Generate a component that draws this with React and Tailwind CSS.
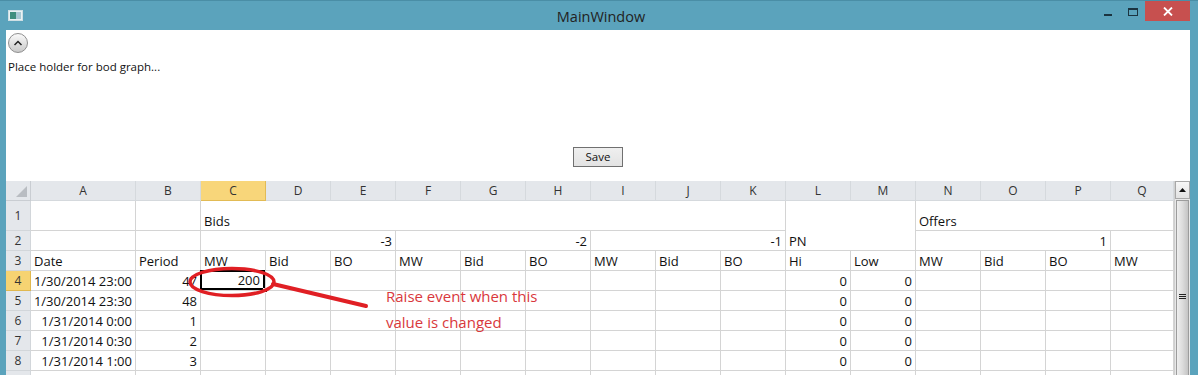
import React from "react";

const COLS = ["A","B","C","D","E","F","G","H","I","J","K","L","M","N","O","P","Q"];

function Cell({ className = "", children }) {
  return (
    <div className={"border-r border-b border-[#d4d4d4] px-[3px] overflow-hidden whitespace-nowrap flex " + className}>
      {children}
    </div>
  );
}

function RowHead({ n, active }) {
  return (
    <div className={"border-r border-b flex items-center justify-center text-[12px] text-[#333] " + (active ? "bg-[#f6d372] border-[#e0b84f]" : "bg-[#e4e7eb] border-[#d2d6da]")}>
      {n}
    </div>
  );
}

const dataRows = [
  { r: 4, a: "1/30/2014 23:00", b: "47", c: "200", l: "0", m: "0" },
  { r: 5, a: "1/30/2014 23:30", b: "48", c: "", l: "0", m: "0" },
  { r: 6, a: "1/31/2014 0:00", b: "1", c: "", l: "0", m: "0" },
  { r: 7, a: "1/31/2014 0:30", b: "2", c: "", l: "0", m: "0" },
  { r: 8, a: "1/31/2014 1:00", b: "3", c: "", l: "0", m: "0" },
  { r: 9, a: "", b: "", c: "", l: "", m: "", hideNum: true },
];

const row3 = ["Date","Period","MW","Bid","BO","MW","Bid","BO","MW","Bid","BO","Hi","Low","MW","Bid","BO","MW"];

export default function App() {
  return (
    <div className="relative w-[1198px] h-[375px] overflow-hidden bg-[#5ba3bc] flex flex-col font-['Open_Sans',sans-serif]">
      {/* Title bar */}
      <div className="h-[30px] shrink-0 flex items-start relative border-t border-[#4a8ea6]">
        <div className="pl-[8px] pt-[9px]">
          <svg width="15" height="11" viewBox="0 0 15 11">
            <rect x="0.5" y="0.5" width="14" height="10" fill="#e9f2f4" stroke="#cfdfe4" />
            <rect x="2" y="2" width="6" height="7" fill="#3f8f7f" />
            <rect x="8" y="2" width="5" height="7" fill="#a9c9d4" />
          </svg>
        </div>
        <div className="flex-1 text-center text-[14.5px] text-[#222] pt-[5px] pl-[84px]">MainWindow</div>
        <div className="flex items-start">
          <div className="w-[25px] h-[19px] flex items-center justify-center">
            <div className="w-[8px] h-[2px] bg-[#1b3440] mt-[8px]" />
          </div>
          <div className="w-[25px] h-[19px] flex items-center justify-center">
            <div className="w-[10px] h-[8px] border border-[#1b3440] border-t-2 mt-[2px]" />
          </div>
          <div className="w-[45px] h-[20px] bg-[#c7504f] flex items-center justify-center mr-[8px]">
            <svg width="10" height="9" viewBox="0 0 10 9">
              <path d="M1 0.5 L9 8.5 M9 0.5 L1 8.5" stroke="#fff" strokeWidth="1.8" />
            </svg>
          </div>
        </div>
      </div>

      {/* Client area */}
      <div className="flex-1 ml-[6px] mr-[8px] bg-white flex flex-col">
        <div className="pl-[2px] pt-[3px]">
          <div className="w-[20px] h-[20px] rounded-full border border-[#8f8f8f] bg-gradient-to-b from-[#fafafa] to-[#c9c9c9] flex items-center justify-center">
            <svg width="10" height="6" viewBox="0 0 10 6">
              <path d="M1.5 5 L5 1.5 L8.5 5" stroke="#222" strokeWidth="1.5" fill="none" />
            </svg>
          </div>
        </div>
        <div className="pl-[2px] pt-[6px] text-[11.5px] leading-[16px] text-[#111]">Place holder for bod graph...</div>
        <div className="h-[72px] shrink-0" />
        <div className="flex justify-center">
          <div className="w-[50px] h-[20px] border border-[#707070] bg-gradient-to-b from-[#efefef] to-[#e3e3e3] flex items-center justify-center text-[11.5px] text-[#111]">Save</div>
        </div>
        <div className="h-[14px] shrink-0" />

        {/* Spreadsheet */}
        <div className="flex text-[13px] leading-[18px] text-[#111]">
          <div className="grid grid-cols-[25px_105px_repeat(15,65px)_63px] grid-rows-[20px_30px_repeat(8,20px)]">
            {/* header row */}
            <div className="bg-[#e4e7eb] border-r border-b border-[#c9cdd2] relative">
              <svg className="absolute right-[3px] bottom-[3px]" width="11" height="11" viewBox="0 0 11 11">
                <path d="M11 0 L11 11 L0 11 Z" fill="#b9bdc2" />
              </svg>
            </div>
            {COLS.map((c) => (
              <div
                key={c}
                className={
                  "flex items-center justify-center text-[12px] text-[#333] border-b border-r " +
                  (c === "C" ? "bg-[#f8d67a] border-[#e2bb55]" : "bg-[#e4e7eb] border-[#d5d9dd]")
                }
              >
                {c}
              </div>
            ))}

            {/* row 1 */}
            <RowHead n={1} />
            <Cell />
            <Cell />
            <Cell className="col-span-9 items-end">Bids</Cell>
            <Cell className="col-span-2 row-span-2 items-end">PN</Cell>
            <Cell className="col-span-4 items-end">Offers</Cell>

            {/* row 2 */}
            <RowHead n={2} />
            <Cell />
            <Cell />
            <Cell className="col-span-3 items-center justify-end">-3</Cell>
            <Cell className="col-span-3 items-center justify-end">-2</Cell>
            <Cell className="col-span-3 items-center justify-end">-1</Cell>
            <Cell className="col-span-3 items-center justify-end">1</Cell>
            <Cell />

            {/* row 3 */}
            <RowHead n={3} />
            {row3.map((t, i) => (
              <Cell key={i} className="items-center">{t}</Cell>
            ))}

            {/* data rows */}
            {dataRows.map((d) => (
              <React.Fragment key={d.r}>
                <RowHead n={d.hideNum ? "" : d.r} active={d.r === 4} />
                <Cell className="items-center justify-end">{d.a}</Cell>
                <Cell className="items-center justify-end">{d.b}</Cell>
                {d.r === 4 ? (
                  <div className="relative border-r border-b border-[#d4d4d4]">
                    <div className="absolute -left-px -top-px right-0 bottom-0 border-2 border-black flex items-center justify-end pr-[3px]">
                      {d.c}
                    </div>
                    <div className="absolute -right-[3px] -bottom-[3px] w-[5px] h-[5px] bg-black border border-white" />
                  </div>
                ) : (
                  <Cell />
                )}
                <Cell /><Cell /><Cell /><Cell /><Cell /><Cell /><Cell /><Cell />
                <Cell className="items-center justify-end">{d.l}</Cell>
                <Cell className="items-center justify-end">{d.m}</Cell>
                <Cell /><Cell /><Cell /><Cell />
              </React.Fragment>
            ))}
          </div>

          {/* scrollbar */}
          <div className="w-[16px] flex flex-col bg-[#e8e8e8] border-l border-[#d0d0d0]">
            <div className="h-[18px] border border-[#a8a8a8] bg-gradient-to-b from-[#f7f7f7] to-[#e2e2e2] flex items-center justify-center">
              <svg width="7" height="4" viewBox="0 0 7 4"><path d="M0 4 L3.5 0 L7 4 Z" fill="#111" /></svg>
            </div>
            <div className="flex-1 px-[1px] pt-[1px]">
              <div className="h-[220px] border border-[#9c9c9c] bg-gradient-to-r from-[#efefef] via-[#dcdcdc] to-[#c4c4c4] flex flex-col items-center pt-[93px]">
                <div className="w-[7px] h-px bg-[#222]" />
                <div className="w-[7px] h-px bg-[#222] mt-px" />
                <div className="w-[7px] h-px bg-[#222] mt-px" />
              </div>
            </div>
          </div>
        </div>
      </div>

      {/* annotation overlay */}
      <svg className="absolute left-0 top-0 pointer-events-none" width="1198" height="375">
        <ellipse cx="232" cy="282" rx="42" ry="13.5" fill="none" stroke="#e01f24" strokeWidth="3.5" />
        <path d="M273 284 L366 306" stroke="#e01f24" strokeWidth="4" strokeLinecap="round" />
      </svg>
      <div className="absolute left-[386px] top-[283px] text-[15px] leading-[26px] text-[#d9383c] font-['Open_Sans',sans-serif]">
        <div>Raise event when this</div>
        <div>value is changed</div>
      </div>
    </div>
  );
}
